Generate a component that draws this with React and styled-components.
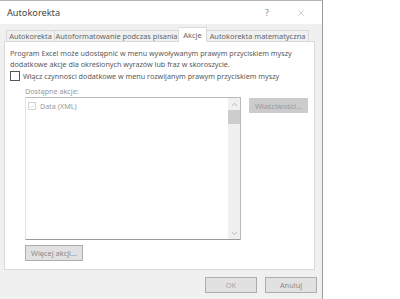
import styled, { createGlobalStyle } from "styled-components";
import { X, ChevronUp, ChevronDown, Check } from "lucide-react";

const Global = createGlobalStyle`
  body {
    margin: 0;
    background: #ffffff;
    font-family: "Noto Sans", "Open Sans", sans-serif;
  }
`;

const Page = styled.div`
  width: 400px;
  height: 299px;
  background: #ffffff;
`;

const Dialog = styled.div`
  width: 323px;
  height: 299px;
  box-sizing: border-box;
  background: #f0f0f0;
  border-right: 1px solid #9a9a9a;
  border-top: 1px solid #b5b5b5;
  display: flex;
  flex-direction: column;
`;

const TitleBar = styled.div`
  height: 23px;
  background: #ffffff;
  display: flex;
  align-items: center;
  padding: 0 10px 0 7px;
  font-size: 9.2px;
  color: #444;
`;

const Title = styled.div`
  flex: 1;
`;

const TitleButton = styled.div`
  width: ${(p) => p.$w}px;
  display: flex;
  justify-content: center;
  align-items: center;
  color: #8a8a8a;
  font-size: 9px;
`;

const TabRow = styled.div`
  display: flex;
  align-items: flex-end;
  height: 18px;
  padding-left: 6px;
  margin-bottom: -1px;
  position: relative;
  z-index: 1;
`;

const Tab = styled.div`
  width: ${(p) => p.$w}px;
  height: ${(p) => (p.$active ? 15 : 12)}px;
  box-sizing: border-box;
  flex-shrink: 0;
  display: flex;
  align-items: center;
  justify-content: center;
  font-size: 7.4px;
  white-space: nowrap;
  overflow: hidden;
  color: #666;
  background: ${(p) => (p.$active ? "#ffffff" : "#f0f0f0")};
  border: 1px solid #d9d9d9;
  border-bottom: ${(p) => (p.$active ? "1px solid #ffffff" : "1px solid #d9d9d9")};
  & + & {
    border-left: ${(p) => (p.$active ? "1px solid #d9d9d9" : "none")};
  }
`;

const Panel = styled.div`
  margin: 0 7px 0 4px;
  height: 229px;
  box-sizing: border-box;
  background: #ffffff;
  border: 1px solid #d9d9d9;
  padding: 6px 6px 0 5px;
  display: flex;
  flex-direction: column;
`;

const Text = styled.div`
  font-size: 7.2px;
  line-height: 10.5px;
  color: ${(p) => (p.$muted ? "#999" : "#5a5a5a")};
  white-space: nowrap;
`;

const CheckRow = styled.label`
  display: flex;
  align-items: center;
  gap: 3px;
  margin-top: 2px;
`;

const CheckBox = styled.span`
  width: 10px;
  height: 10px;
  flex-shrink: 0;
  box-sizing: border-box;
  border: 1px solid #555;
  background: #fff;
`;

const Group = styled.div`
  margin-left: 15px;
  margin-top: 4px;
  display: flex;
  flex-direction: column;
`;

const ListRow = styled.div`
  display: flex;
  gap: 8px;
  margin-top: 1px;
  align-items: flex-start;
`;

const ListBox = styled.div`
  width: 219px;
  height: 143px;
  box-sizing: border-box;
  border: 1px solid #b9b9b9;
  border-left-color: #e2e2e2;
  border-bottom-color: #9a9a9a;
  display: flex;
`;

const Items = styled.div`
  flex: 1;
  padding: 3px 2px;
`;

const Item = styled.div`
  display: flex;
  align-items: center;
  gap: 4px;
`;

const ItemCheck = styled.span`
  width: 8px;
  height: 8px;
  flex-shrink: 0;
  box-sizing: border-box;
  border: 1px solid #d4d4d4;
  display: flex;
  align-items: center;
  justify-content: center;
  color: #b4b4b4;
`;

const ScrollBar = styled.div`
  width: 12px;
  background: #f0f0f0;
  display: flex;
  flex-direction: column;
  align-items: center;
`;

const Arrow = styled.div`
  height: 12px;
  display: flex;
  align-items: center;
  justify-content: center;
  color: #8a8a8a;
`;

const Thumb = styled.div`
  width: 12px;
  height: 14px;
  background: #cdcdcd;
`;

const Spacer = styled.div`
  flex: 1;
`;

const Button = styled.div`
  width: ${(p) => p.$w}px;
  height: ${(p) => p.$h || 16}px;
  box-sizing: border-box;
  flex-shrink: 0;
  display: flex;
  align-items: center;
  justify-content: center;
  font-size: 7.4px;
  color: ${(p) => (p.$dim ? "#a6a6a6" : "#8a8a8a")};
  background: ${(p) => (p.$flat ? "#cccccc" : "#e1e1e1")};
  border: 1px solid ${(p) => (p.$flat ? "#cccccc" : "#adadad")};
  white-space: nowrap;
`;

const PropsButton = styled(Button)`
  margin-top: 1px;
  color: #9a9a9a;
`;

const MoreButton = styled(Button)`
  margin-top: 5px;
`;

const Footer = styled.div`
  display: flex;
  justify-content: flex-end;
  gap: 8px;
  padding: 7px 5px 0 0;
`;

export default function App() {
  return (
    <Page>
      <Global />
      <Dialog>
        <TitleBar>
          <Title>Autokorekta</Title>
          <TitleButton $w={22}>?</TitleButton>
          <TitleButton $w={22} style={{ marginLeft: 12 }}>
            <X size={10} strokeWidth={1} />
          </TitleButton>
        </TitleBar>
        <TabRow>
          <Tab $w={49}>Autokorekta</Tab>
          <Tab $w={124}>Autoformatowanie podczas pisania</Tab>
          <Tab $w={28} $active>Akcje</Tab>
          <Tab $w={102}>Autokorekta matematyczna</Tab>
        </TabRow>
        <Panel>
          <Text>Program Excel może udostępnić w menu wywoływanym prawym przyciskiem myszy</Text>
          <Text>dodatkowe akcje dla określonych wyrazów lub fraz w skoroszycie.</Text>
          <CheckRow>
            <CheckBox />
            <Text>Włącz czynności dodatkowe w menu rozwijanym prawym przyciskiem myszy</Text>
          </CheckRow>
          <Group>
            <Text $muted>Dostępne akcje:</Text>
            <ListRow>
              <ListBox>
                <Items>
                  <Item>
                    <ItemCheck>
                      <Check size={7} strokeWidth={1.5} />
                    </ItemCheck>
                    <Text $muted>Data (XML)</Text>
                  </Item>
                </Items>
                <ScrollBar>
                  <Arrow>
                    <ChevronUp size={9} strokeWidth={1.5} />
                  </Arrow>
                  <Thumb />
                  <Spacer />
                  <Arrow>
                    <ChevronDown size={9} strokeWidth={1.5} />
                  </Arrow>
                </ScrollBar>
              </ListBox>
              <PropsButton $w={59} $h={15} $flat>Właściwości...</PropsButton>
            </ListRow>
            <MoreButton $w={58}>Więcej akcji...</MoreButton>
          </Group>
        </Panel>
        <Footer>
          <Button $w={52} $dim>OK</Button>
          <Button $w={52}>Anuluj</Button>
        </Footer>
      </Dialog>
    </Page>
  );
}
